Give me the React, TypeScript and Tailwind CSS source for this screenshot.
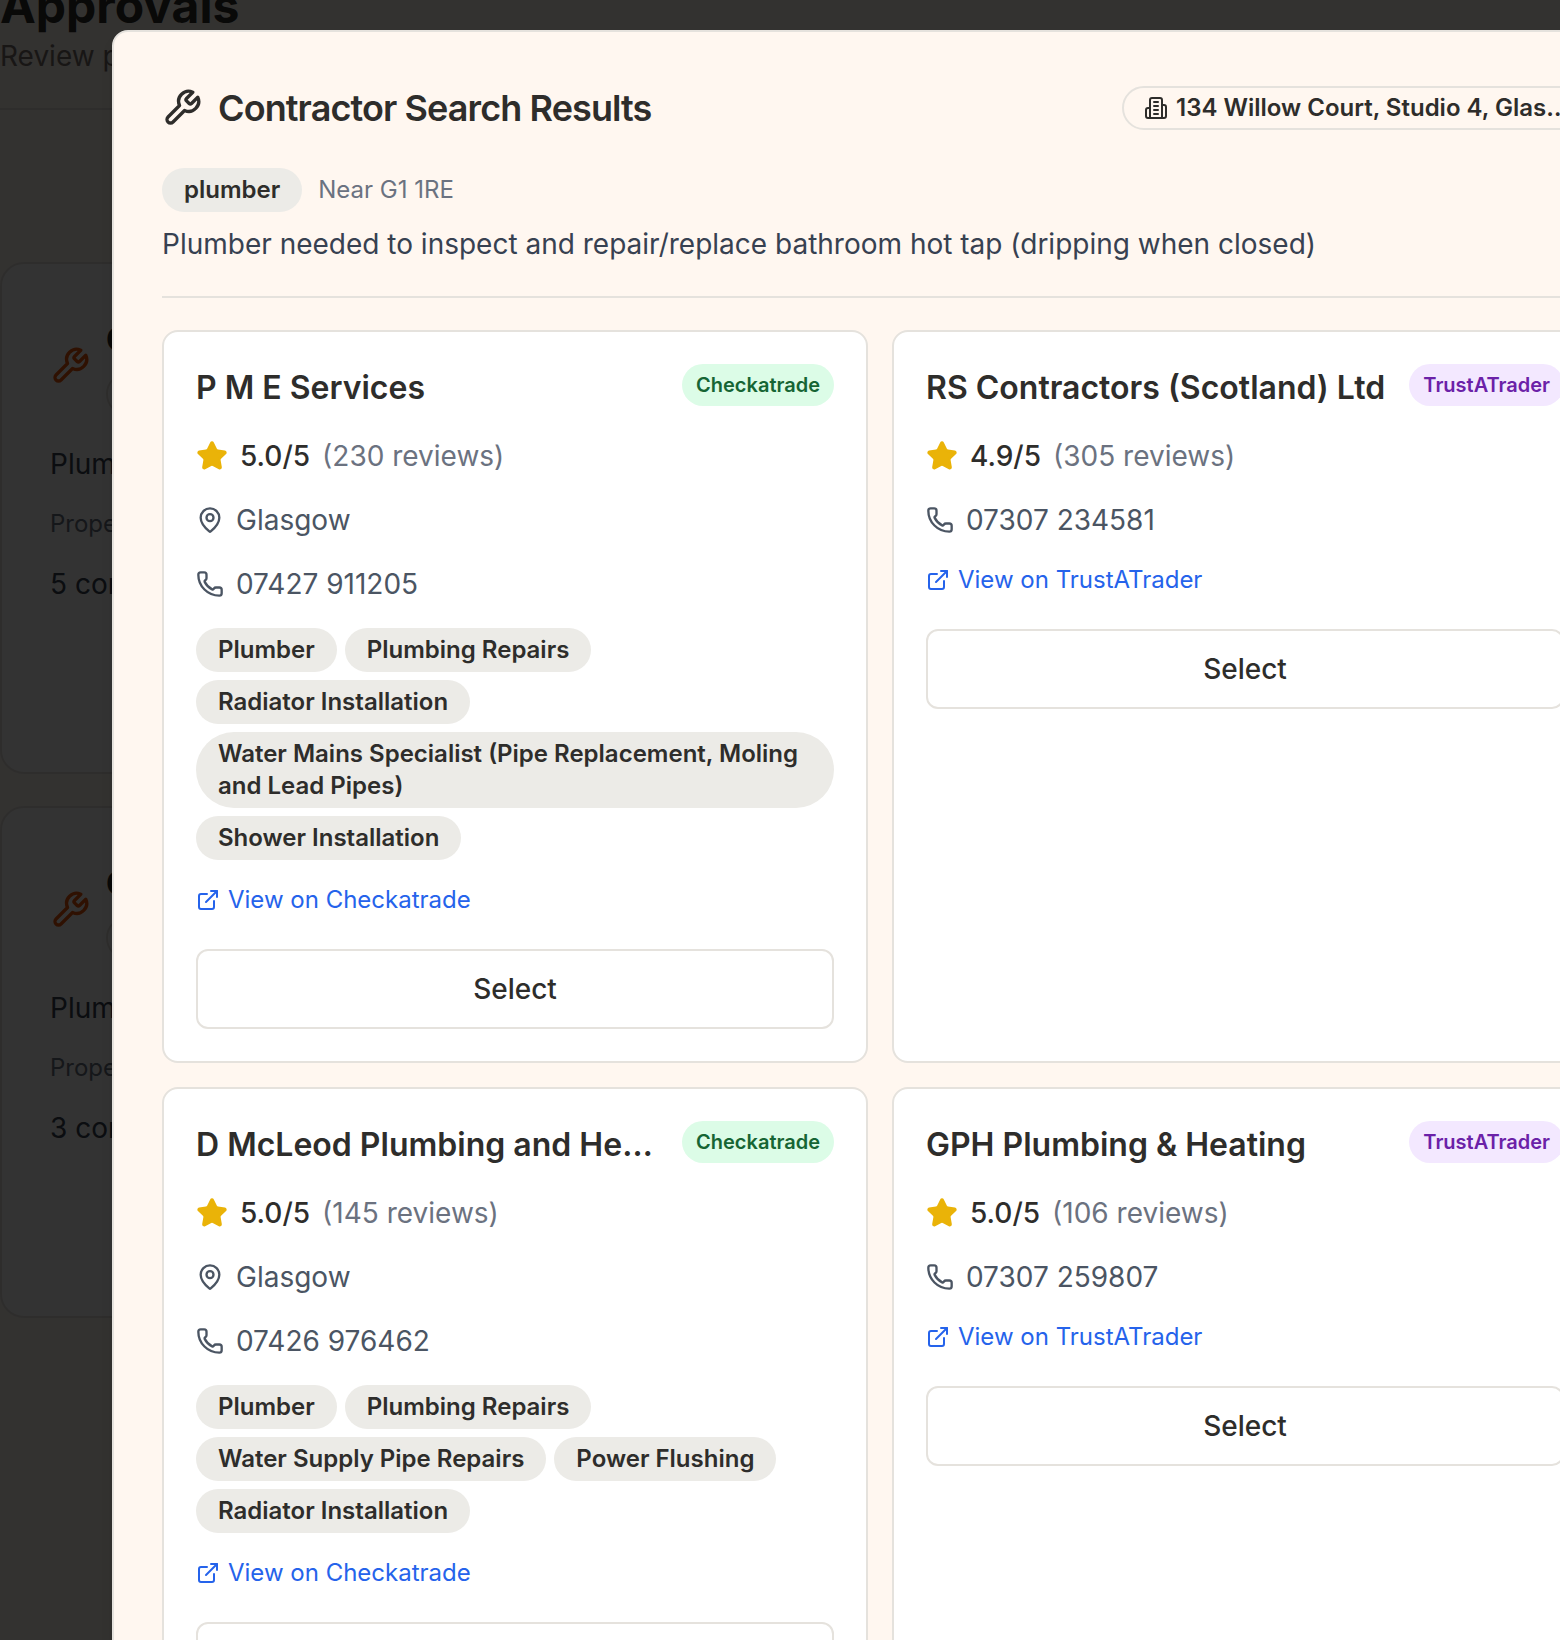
import React from "react";
import { ExternalLink, MapPin, Phone, Star } from "lucide-react";

type Source = "Checkatrade" | "TrustATrader";

interface Contractor {
  name: string;
  source: Source;
  rating: string;
  reviews: number;
  location?: string;
  phone: string;
  skills?: string[];
}

const contractors: Contractor[] = [
  {
    name: "P M E Services",
    source: "Checkatrade",
    rating: "5.0",
    reviews: 230,
    location: "Glasgow",
    phone: "07427 911205",
    skills: [
      "Plumber",
      "Plumbing Repairs",
      "Radiator Installation",
      "Water Mains Specialist (Pipe Replacement, Moling and Lead Pipes)",
      "Shower Installation",
    ],
  },
  {
    name: "RS Contractors (Scotland) Ltd",
    source: "TrustATrader",
    rating: "4.9",
    reviews: 305,
    phone: "07307 234581",
  },
  {
    name: "D McLeod Plumbing and Heating",
    source: "Checkatrade",
    rating: "5.0",
    reviews: 145,
    location: "Glasgow",
    phone: "07426 976462",
    skills: [
      "Plumber",
      "Plumbing Repairs",
      "Water Supply Pipe Repairs",
      "Power Flushing",
      "Radiator Installation",
    ],
  },
  {
    name: "GPH Plumbing & Heating",
    source: "TrustATrader",
    rating: "5.0",
    reviews: 106,
    phone: "07307 259807",
  },
];

interface IconProps {
  className?: string;
}

function StrokeIcon({ className, children }: IconProps & { children: React.ReactNode }) {
  return (
    <svg
      viewBox="0 0 24 24"
      fill="none"
      stroke="currentColor"
      strokeWidth="2"
      strokeLinecap="round"
      strokeLinejoin="round"
      aria-hidden="true"
      className={className}
    >
      {children}
    </svg>
  );
}

function WrenchIcon({ className }: IconProps) {
  return (
    <StrokeIcon className={className}>
      <path d="M14.7 6.3a1 1 0 0 0 0 1.4l1.6 1.6a1 1 0 0 0 1.4 0l3.77-3.77a6 6 0 0 1-7.94 7.94l-6.91 6.91a2.12 2.12 0 0 1-3-3l6.91-6.91a6 6 0 0 1 7.94-7.94l-3.76 3.76z" />
    </StrokeIcon>
  );
}

function BuildingIcon({ className }: IconProps) {
  return (
    <StrokeIcon className={className}>
      <path d="M6 22V4a2 2 0 0 1 2-2h8a2 2 0 0 1 2 2v18Z" />
      <path d="M6 12H4a2 2 0 0 0-2 2v6a2 2 0 0 0 2 2h2" />
      <path d="M18 9h2a2 2 0 0 1 2 2v9a2 2 0 0 1-2 2h-2" />
      <path d="M10 6h4" />
      <path d="M10 10h4" />
      <path d="M10 14h4" />
      <path d="M10 18h4" />
    </StrokeIcon>
  );
}

function Pill({ children }: { children: React.ReactNode }) {
  return (
    <span className="rounded-[38px] bg-[#ecebe7] px-[22px] py-1.5 text-2xl/8 font-semibold text-[#2e2d2b]">
      {children}
    </span>
  );
}

function SourceBadge({ source }: { source: Source }) {
  const tone =
    source === "Checkatrade" ? "bg-[#dcfce7] text-[#166534]" : "bg-[#f3e8ff] text-[#6b21a8]";
  return (
    <span className={`shrink-0 rounded-full px-3.5 py-1.5 text-xl/[30px] font-semibold ${tone}`}>
      {source}
    </span>
  );
}

function ContractorCard({ contractor }: { contractor: Contractor }) {
  const { name, source, rating, reviews, location, phone, skills } = contractor;
  return (
    <article className="flex flex-col gap-6 rounded-2xl border-2 border-[#e5e2dd] bg-white p-8 text-[28px]/10">
      <div className="flex items-start justify-between gap-4">
        <h3 className="min-w-0 truncate text-[32px]/[48px] font-semibold">{name}</h3>
        <SourceBadge source={source} />
      </div>
      <div className="flex items-center gap-3">
        <Star className="size-8 fill-[#eab308] text-[#eab308]" />
        <span className="font-medium">{rating}/5</span>
        <span className="text-[#6b7280]">({reviews} reviews)</span>
      </div>
      {location && (
        <div className="flex items-center gap-3 text-[#4b5563]">
          <MapPin className="size-7" />
          <span>{location}</span>
        </div>
      )}
      <div className="flex items-center gap-3 text-[#4b5563]">
        <Phone className="size-7" />
        <span>{phone}</span>
      </div>
      {skills && (
        <div className="flex flex-wrap gap-2">
          {skills.map((skill) => (
            <Pill key={skill}>{skill}</Pill>
          ))}
        </div>
      )}
      <a href="#" className="flex items-center gap-2 self-start text-2xl/8 text-[#2563eb]">
        <ExternalLink className="size-6" />
        View on {source}
      </a>
      <div className="pt-[9px]">
        <button
          type="button"
          className="h-20 w-full rounded-xl border-2 border-[#e5e2dd] bg-white font-medium"
        >
          Select
        </button>
      </div>
    </article>
  );
}

function ApprovalCard({ count }: { count: number }) {
  return (
    <section className="h-128 rounded-3xl border-2 border-[#e5e2dd] bg-white px-12 pt-12">
      <div className="flex h-27 items-center gap-4">
        <WrenchIcon className="size-10 shrink-0 text-[#ea580c]" />
        <div className="flex flex-col gap-2">
          <h2 className="text-[32px]/[48px] font-bold whitespace-nowrap">Contractor</h2>
          <span className="h-11 w-80 rounded-full border-2 border-[#e5e2dd]" />
        </div>
      </div>
      <p className="mt-6 text-[28px]/10 text-[#374151]">Plumber</p>
      <p className="mt-6 text-2xl/8 text-[#6b7280]">Property</p>
      <p className="mt-6 text-[28px]/10 text-[#374151]">{count} contractors</p>
    </section>
  );
}

function ApprovalsPage() {
  return (
    <main className="h-screen overflow-hidden bg-[#fff7f0]">
      <header className="-mt-6 border-b-2 border-[#e5e2dd] pb-8">
        <h1 className="text-[48px]/[60px] font-bold">Approvals</h1>
        <p className="text-[28px]/10 text-[#78716c]">Review pending</p>
      </header>
      <div className="flex flex-col gap-8 pt-[152px]">
        <ApprovalCard count={5} />
        <ApprovalCard count={3} />
      </div>
    </main>
  );
}

export default function App() {
  return (
    <div className="relative h-screen overflow-hidden font-['Inter',sans-serif] text-[#2e2d2b]">
      <ApprovalsPage />
      <div className="absolute inset-0 overflow-hidden bg-black/80 pt-[30px] pl-28">
        <div
          role="dialog"
          aria-labelledby="dialog-title"
          className="w-[1536px] rounded-2xl border-2 border-[#e5e2dd] bg-[#fff7f0] p-12 shadow-lg"
        >
          <header className="border-b-2 border-[#e5e2dd] pb-8">
            <div className="flex h-14 items-center gap-4">
              <WrenchIcon className="size-10" />
              <h2 id="dialog-title" className="text-[36px]/[56px] font-semibold tracking-tight">
                Contractor Search Results
              </h2>
              <span className="mr-1 ml-auto flex w-[472px] items-center gap-2 rounded-full border-2 border-[#e5e2dd] px-5 py-1 text-2xl/8 font-semibold">
                <BuildingIcon className="size-6 shrink-0" />
                <span className="truncate">134 Willow Court, Studio 4, Glasgow</span>
              </span>
            </div>
            <div className="mt-8 flex items-center gap-4">
              <Pill>plumber</Pill>
              <span className="text-2xl/8 text-[#6b7280]">Near G1 1RE</span>
            </div>
            <p className="mt-3 text-[28px]/10 text-[#374151]">
              Plumber needed to inspect and repair/replace bathroom hot tap (dripping when closed)
            </p>
          </header>
          <div className="grid grid-cols-2 gap-6 pt-8">
            {contractors.map((contractor) => (
              <ContractorCard key={contractor.name} contractor={contractor} />
            ))}
          </div>
        </div>
      </div>
    </div>
  );
}
